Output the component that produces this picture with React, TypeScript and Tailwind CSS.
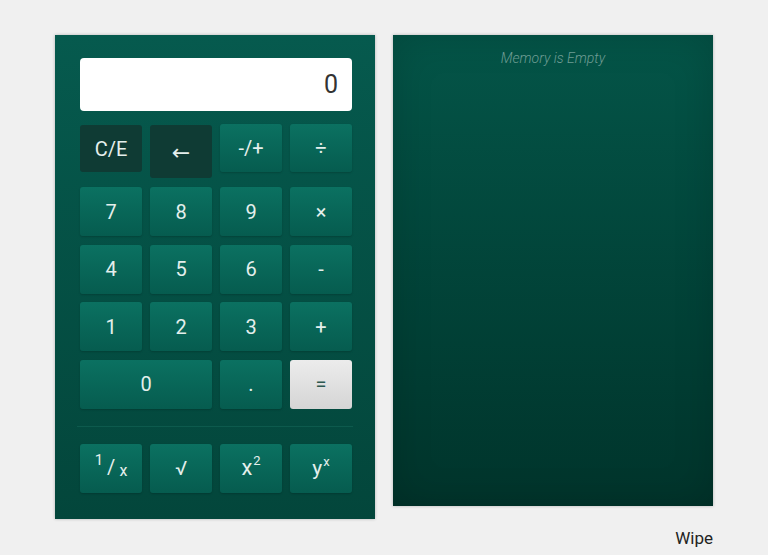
import { ReactNode } from "react";

type KeyProps = {
  children: ReactNode;
  variant?: "normal" | "dark" | "light";
  className?: string;
};

function Key({ children, variant = "normal", className = "" }: KeyProps) {
  const look =
    variant === "dark"
      ? "bg-[#0f3b34] text-[#e4efec]"
      : variant === "light"
        ? "bg-gradient-to-b from-[#ececec] to-[#d5d5d5] text-[#2d5950]"
        : "bg-gradient-to-b from-[#0b7161] to-[#065c4f] text-[#e4efec] shadow-[0_1px_2px_rgba(0,0,0,0.18)]";
  return (
    <button
      className={`flex items-center justify-center rounded-[3px] text-[20px] leading-none ${look} ${className}`}
    >
      {children}
    </button>
  );
}

function App() {
  return (
    <div
      className="h-[555px] w-full bg-[#f0f0f0] pt-[35px]"
      style={{ fontFamily: "Roboto, 'Liberation Sans', sans-serif" }}
    >
      <div className="flex justify-center gap-[18px]">
        {/* calculator */}
        <div className="flex h-[484px] w-[320px] flex-col bg-gradient-to-b from-[#065a4e] to-[#03463b] px-[25px] pt-[23px] shadow-[0_0_3px_rgba(0,0,0,0.25)]">
          <div className="flex h-[53px] w-[272px] items-center justify-end rounded-[4px] bg-white pr-[14px] text-[25px] text-[#333]">
            0
          </div>

          <div className="mt-[13px] grid w-[272px] grid-cols-4 items-start gap-x-[8px]">
            <Key variant="dark" className="mt-[1px] h-[47px]">
              C/E
            </Key>
            <Key variant="dark" className="mt-[1px] h-[53px] text-[22px]">
              <span className="mt-[2px]" style={{ fontFamily: "'DejaVu Sans', sans-serif" }}>←</span>
            </Key>
            <Key className="h-[48px] text-[19px]">-/+</Key>
            <Key className="h-[48px] text-[18px]">÷</Key>
          </div>

          <div className="mt-[9px] flex flex-col gap-[8.5px]">
            <div className="grid h-[49px] w-[272px] grid-cols-4 gap-x-[8px]">
              <Key>7</Key>
              <Key>8</Key>
              <Key>9</Key>
              <Key className="text-[17px]">×</Key>
            </div>
            <div className="grid h-[49px] w-[272px] grid-cols-4 gap-x-[8px]">
              <Key>4</Key>
              <Key>5</Key>
              <Key>6</Key>
              <Key className="text-[17px]">-</Key>
            </div>
            <div className="grid h-[49px] w-[272px] grid-cols-4 gap-x-[8px]">
              <Key>1</Key>
              <Key>2</Key>
              <Key>3</Key>
              <Key className="text-[20px]">+</Key>
            </div>
            <div className="grid h-[49px] w-[272px] grid-cols-4 gap-x-[8px]">
              <Key className="col-span-2">0</Key>
              <Key>.</Key>
              <Key variant="light" className="text-[17px]">
                =
              </Key>
            </div>
          </div>

          <div className="-mx-[3px] mt-[17px] border-t border-[#0d5a4d]" />

          <div className="mt-[17px] grid h-[49px] w-[272px] grid-cols-4 gap-x-[8px]">
            <Key>
              <span className="flex items-start gap-[4px]">
                <span className="mt-[-4px] text-[15px]">1</span>
                <span className="text-[20px]">/</span>
                <span className="mt-[6px] text-[16px]">x</span>
              </span>
            </Key>
            <Key>√</Key>
            <Key>
              <span className="flex items-start gap-[1px]">
                <span className="text-[22px]">x</span>
                <span className="mt-[-3px] text-[13px]">2</span>
              </span>
            </Key>
            <Key>
              <span className="flex items-start gap-[1px]">
                <span className="text-[21px]">y</span>
                <span className="mt-[-3px] text-[13px]">x</span>
              </span>
            </Key>
          </div>
        </div>

        {/* memory */}
        <div className="flex w-[320px] flex-col">
          <div className="h-[471px] w-[320px] bg-gradient-to-b from-[#045548] to-[#00342b] pt-[15px] shadow-[0_0_3px_rgba(0,0,0,0.25),inset_0_0_40px_rgba(0,0,0,0.16)]">
            <p className="text-center text-[14px] font-light italic leading-[16px] text-[#6f9d94]">
              Memory is Empty
            </p>
          </div>
          <div className="mt-[22px] text-right text-[17px] leading-[20px] text-[#222]">Wipe</div>
        </div>
      </div>
    </div>
  );
}

export default App;
